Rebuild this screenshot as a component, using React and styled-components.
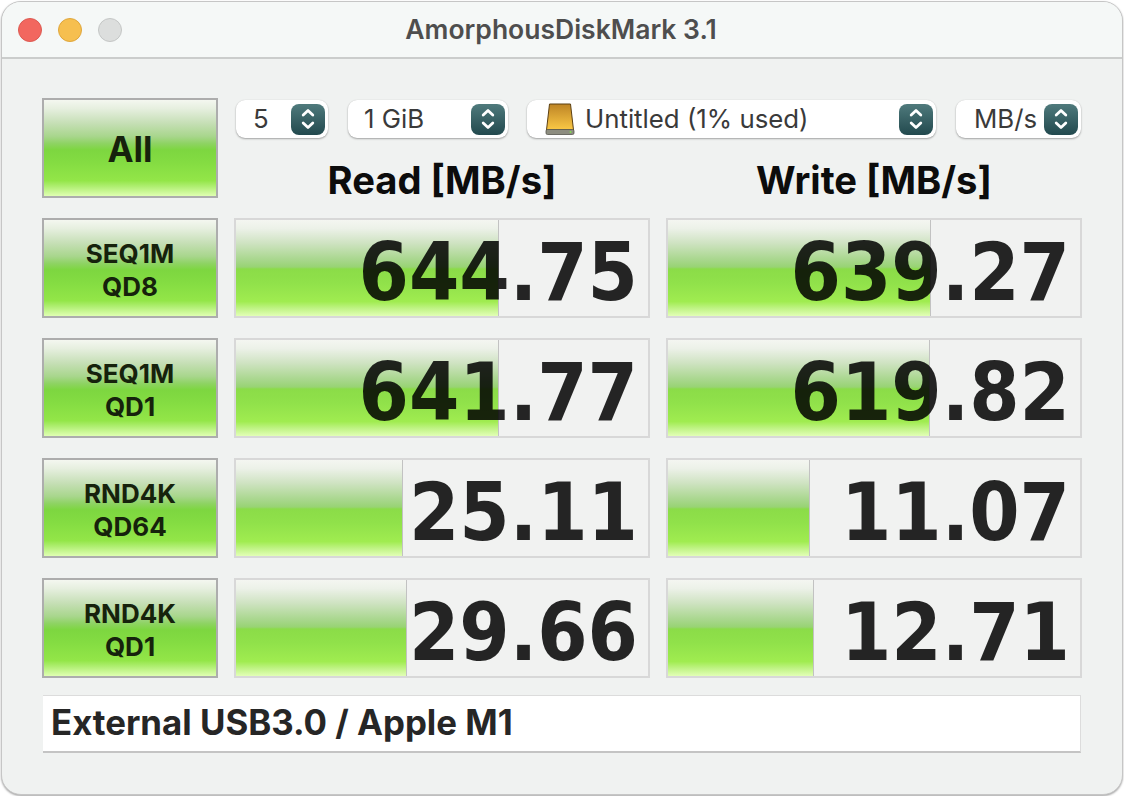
import React from 'react'
import styled, { createGlobalStyle } from 'styled-components'

const BUTTON_GREEN = `linear-gradient(180deg,
  #f4f7f0 0%, #e6efdf 9%, #c6dfb6 24%, #a8d68c 38%, #8fd365 45%, #7dd640 52%, #84dc42 65%, #93e648 84%, #b4f078 91%, #e0ffb2 100%)`

const BAR_GREEN = `linear-gradient(180deg,
  #f4f6f1 0%, #ecf1e8 9%, #cfe3c2 24%, #a9d78e 41%, #98d374 49%, #8bdc48 51%, #90e14a 65%, #a0ec50 85%, #c0f385 92%, #e2ffb6 100%)`

const Global = createGlobalStyle`
  html, body { margin: 0; padding: 0; background: #fff; }
  * { box-sizing: border-box; }
  body { font-family: Inter, "Liberation Sans", sans-serif; }
`

const Window = styled.div`
  width: 1122px;
  height: 794px;
  margin: 1px;
  border: 1px solid #c6c6c6;
  border-radius: 20px;
  background: #f0f2f1;
  overflow: hidden;
  box-shadow: 0 1px 2px rgba(0,0,0,.35);
`
const TitleBar = styled.div`
  height: 57px;
  display: grid;
  grid-template-columns: 1fr auto 1fr;
  align-items: center;
  padding: 0 16px;
  background: #f5f8f7;
  border-bottom: 2px solid #cbcdcc;
`
const Lights = styled.div`
  display: flex;
  gap: 16px;
`
const Light = styled.span`
  width: 24px;
  height: 24px;
  border-radius: 50%;
  background: ${p => p.$color};
  border: 1px solid ${p => p.$edge};
`
const Title = styled.div`
  font-size: 26.5px;
  font-weight: 600;
  color: #4e4e4e;
  padding-bottom: 2px;
  margin-left: -2px;
`
const Content = styled.div`
  padding: 39px 40px 0 40px;
  display: flex;
  flex-direction: column;
  gap: 20px;
`
const Row = styled.div`
  display: grid;
  grid-template-columns: 176px 416px 416px;
  column-gap: 16px;
  height: 100px;
`
const Head = styled.div`
  display: grid;
  grid-template-columns: 176px 1fr;
  grid-template-rows: 100px;
  column-gap: 16px;
`
const Button = styled.div`
  border: 2px solid #adadad;
  background: ${BUTTON_GREEN};
  display: flex;
  flex-direction: column;
  align-items: center;
  justify-content: center;
  padding-top: ${p => p.$big ? '2px' : '3px'};
  color: #16220c;
  font-weight: 700;
  font-size: ${p => p.$big ? '35px' : '26px'};
  line-height: 33px;
`
const Controls = styled.div`
  display: flex;
  flex-direction: column;
`
const Selects = styled.div`
  display: flex;
  height: 38px;
  margin-top: 2px;
  padding-left: 2px;
`
const Select = styled.div`
  width: ${p => p.$w}px;
  margin-left: ${p => p.$gap}px;
  height: 38px;
  display: flex;
  align-items: center;
  background: #fff;
  border-radius: 9px;
  box-shadow: 0 1px 2px rgba(0,0,0,.32), 0 0 1px rgba(0,0,0,.12);
  padding: 0 3px 0 ${p => p.$pad}px;
  color: #3a3a3a;
  font-size: 25.8px;
`
const SelectText = styled.span`
  flex: 1;
  white-space: nowrap;
  padding-bottom: 2px;
`
const Stepper = styled.span`
  width: 34px;
  height: 31px;
  border-radius: 8px;
  display: flex;
  align-items: center;
  justify-content: center;
  background: linear-gradient(180deg, #4f7a7c, #22494e);
`
const Headers = styled.div`
  display: grid;
  grid-template-columns: 416px 416px;
  column-gap: 16px;
  margin-top: 24px;
`
const ColTitle = styled.div`
  text-align: center;
  font-size: 38.2px;
  line-height: 36px;
  font-weight: 700;
  color: #0c0c0c;
`
const Meter = styled.div`
  display: grid;
  border: 2px solid #d8d8d8;
  background: #f1f2f1;
  overflow: hidden;
`
const Bar = styled.div`
  grid-area: 1 / 1;
  background: ${BAR_GREEN};
  border-right: 1.5px solid #c2c2c2;
`
const Value = styled.div`
  grid-area: 1 / 1;
  justify-self: end;
  align-self: center;
  padding: 9px 10px 0 0;
  font-family: "DejaVu Sans", sans-serif;
  font-stretch: condensed;
  font-weight: 700;
  font-size: 80.5px;
  line-height: 87px;
  color: rgba(0,0,0,.85);
`
const Comment = styled.div`
  margin: -3px 1px 0 1px;
  height: 58px;
  background: #fff;
  border-top: 1px solid #dcdcdc;
  border-right: 1px solid #dcdcdc;
  border-bottom: 2px solid #c4c4c4;
  padding: 0 0 3px 8px;
  display: flex;
  align-items: center;
  font-size: 34.8px;
  font-weight: 700;
  color: #262626;
`
const DriveIcon = styled.svg`
  width: 30px;
  height: 32px;
  margin-right: 10px;
  flex: none;
`

const Updown = () => (
  <svg width="16" height="24" viewBox="0 0 16 24" fill="none" stroke="#fff" strokeWidth="2.8" strokeLinecap="round" strokeLinejoin="round">
    <path d="M3.2 8 L8 3.5 L12.8 8" />
    <path d="M3.2 16 L8 20.5 L12.8 16" />
  </svg>
)

const Drive = () => (
  <DriveIcon viewBox="0 0 30 32">
    <defs>
      <linearGradient id="drv" x1="0" y1="0" x2="0" y2="1">
        <stop offset="0" stopColor="#bd8426" />
        <stop offset="1" stopColor="#fbc945" />
      </linearGradient>
    </defs>
    <path d="M4.5 1 H25.5 L28.5 27 H1.5 Z" fill="url(#drv)" stroke="#5c4012" strokeWidth="1" />
    <rect x="1" y="26.5" width="28" height="5" rx="1.5" fill="#8d8d80" stroke="#55554c" strokeWidth=".8" />
    <circle cx="25.5" cy="29" r="1" fill="#7fe04a" />
  </DriveIcon>
)

const rows = [
  { top: 'SEQ1M', bottom: 'QD8', read: '644.75', rw: 263, write: '639.27', ww: 263 },
  { top: 'SEQ1M', bottom: 'QD1', read: '641.77', rw: 263, write: '619.82', ww: 262 },
  { top: 'RND4K', bottom: 'QD64', read: '25.11', rw: 167, write: '11.07', ww: 142 },
  { top: 'RND4K', bottom: 'QD1', read: '29.66', rw: 171, write: '12.71', ww: 146 },
]

function App() {
  return (
    <>
      <Global />
      <Window>
        <TitleBar>
          <Lights>
            <Light $color="#f2675f" $edge="#dc5a52" />
            <Light $color="#f6bf4f" $edge="#dfa63c" />
            <Light $color="#dcdedd" $edge="#c4c6c5" />
          </Lights>
          <Title>AmorphousDiskMark 3.1</Title>
        </TitleBar>
        <Content>
          <Head>
            <Button $big>All</Button>
            <Controls>
              <Selects>
                <Select $w={92} $gap={0} $pad={17}><SelectText>5</SelectText><Stepper><Updown /></Stepper></Select>
                <Select $w={160} $gap={20} $pad={16}><SelectText>1 GiB</SelectText><Stepper><Updown /></Stepper></Select>
                <Select $w={409} $gap={19} $pad={18}><Drive /><SelectText>Untitled (1% used)</SelectText><Stepper><Updown /></Stepper></Select>
                <Select $w={125} $gap={20} $pad={18}><SelectText>MB/s</SelectText><Stepper><Updown /></Stepper></Select>
              </Selects>
              <Headers>
                <ColTitle>Read [MB/s]</ColTitle>
                <ColTitle>Write [MB/s]</ColTitle>
              </Headers>
            </Controls>
          </Head>
          {rows.map((r, i) => (
            <Row key={i}>
              <Button><span>{r.top}</span><span>{r.bottom}</span></Button>
              <Meter>
                <Bar style={{ width: r.rw }} />
                <Value>{r.read}</Value>
              </Meter>
              <Meter>
                <Bar style={{ width: r.ww }} />
                <Value>{r.write}</Value>
              </Meter>
            </Row>
          ))}
          <Comment>External USB3.0 / Apple M1</Comment>
        </Content>
      </Window>
    </>
  )
}

export default App
